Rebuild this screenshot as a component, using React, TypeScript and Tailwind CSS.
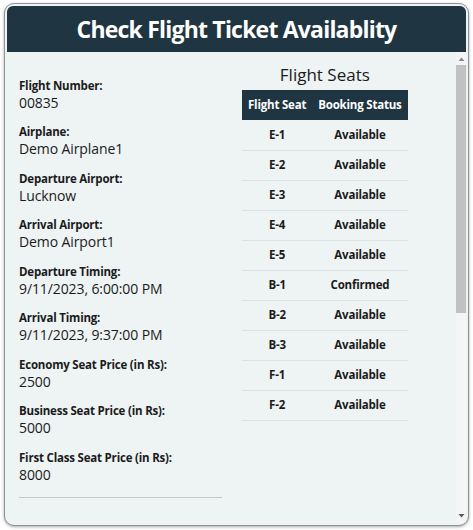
import React from "react";

type Detail = { label: string; value: string };

const details: Detail[] = [
  { label: "Flight Number:", value: "00835" },
  { label: "Airplane:", value: "Demo Airplane1" },
  { label: "Departure Airport:", value: "Lucknow" },
  { label: "Arrival Airport:", value: "Demo Airport1" },
  { label: "Departure Timing:", value: "9/11/2023, 6:00:00 PM" },
  { label: "Arrival Timing:", value: "9/11/2023, 9:37:00 PM" },
  { label: "Economy Seat Price (in Rs):", value: "2500" },
  { label: "Business Seat Price (in Rs):", value: "5000" },
  { label: "First Class Seat Price (in Rs):", value: "8000" },
];

const seats = [
  { seat: "E-1", status: "Available" },
  { seat: "E-2", status: "Available" },
  { seat: "E-3", status: "Available" },
  { seat: "E-4", status: "Available" },
  { seat: "E-5", status: "Available" },
  { seat: "B-1", status: "Confirmed" },
  { seat: "B-2", status: "Available" },
  { seat: "B-3", status: "Available" },
  { seat: "F-1", status: "Available" },
  { seat: "F-2", status: "Available" },
];

// drawn scrollbar (headless browser hides the native one)
const ScrollBar: React.FC = () => (
  <div className="flex w-[10px] shrink-0 flex-col items-center bg-[#f3f5f6] pb-[3px] pt-[3px]">
    <svg width="7" height="6" viewBox="0 0 7 6" className="mt-[1px] shrink-0">
      <path d="M0.5 5 L3.5 1.5 L6.5 5 Z" fill="#8a8a8a" />
    </svg>
    <div className="mt-[3px] h-[248px] w-full shrink-0 bg-[#c1c1c1]" />
    <div className="flex-1" />
    <svg width="7" height="6" viewBox="0 0 7 6" className="mb-[1px] shrink-0">
      <path d="M0.5 1 L3.5 4.5 L6.5 1 Z" fill="#5a5a5a" />
    </svg>
  </div>
);

const App: React.FC = () => {
  return (
    <div className="h-[530px] w-[473px] bg-white p-[3px_4px_4px_4px] font-['Open_Sans',sans-serif] text-[#1b1b1b]">
      <div className="flex h-full flex-col overflow-hidden rounded-[10px] border border-[#8d9396] bg-[#eef3f4] p-[2px] shadow-[0_1px_3px_rgba(0,0,0,0.35)]">
        <header className="flex h-[46px] shrink-0 items-center justify-center rounded-t-[6px] bg-[#1f3542]">
          <h1 className="text-[23px] font-bold tracking-[-0.8px] text-white">Check Flight Ticket Availablity</h1>
        </header>

        <div className="flex min-h-0 flex-1">
          <div className="min-w-0 flex-1 overflow-hidden pl-3 pt-[13px]">
            <div className="flex items-start gap-5">
              <div className="w-[203px] pt-[12.5px]">
                {details.map((d) => (
                  <div key={d.label} className="mb-3">
                    <div className="text-[11.5px] font-bold leading-[15px] tracking-[-0.2px]">{d.label}</div>
                    <div className="text-[14px] leading-[19.5px] tracking-[-0.1px]">{d.value}</div>
                  </div>
                ))}
                <hr className="mt-[13px] border-t border-[#c3c8ca]" />
                <div className="h-[340px]" />
              </div>

              <div className="flex flex-col items-center">
                <h2 className="mb-[5px] text-[17px] leading-[20px]">Flight Seats</h2>
                <table className="border-collapse text-[11.5px] font-bold tracking-[-0.2px]">
                  <thead>
                    <tr className="h-[30px] bg-[#1f3542] text-white">
                      <th className="px-[6px] font-bold">Flight Seat</th>
                      <th className="px-[6px] font-bold">Booking Status</th>
                    </tr>
                  </thead>
                  <tbody>
                    {seats.map((s) => (
                      <tr key={s.seat} className="h-[30px] border-b border-[#dde3e5] text-center">
                        <td>{s.seat}</td>
                        <td>{s.status}</td>
                      </tr>
                    ))}
                  </tbody>
                </table>
              </div>
            </div>
          </div>
          <ScrollBar />
        </div>
      </div>
    </div>
  );
};

export default App;
